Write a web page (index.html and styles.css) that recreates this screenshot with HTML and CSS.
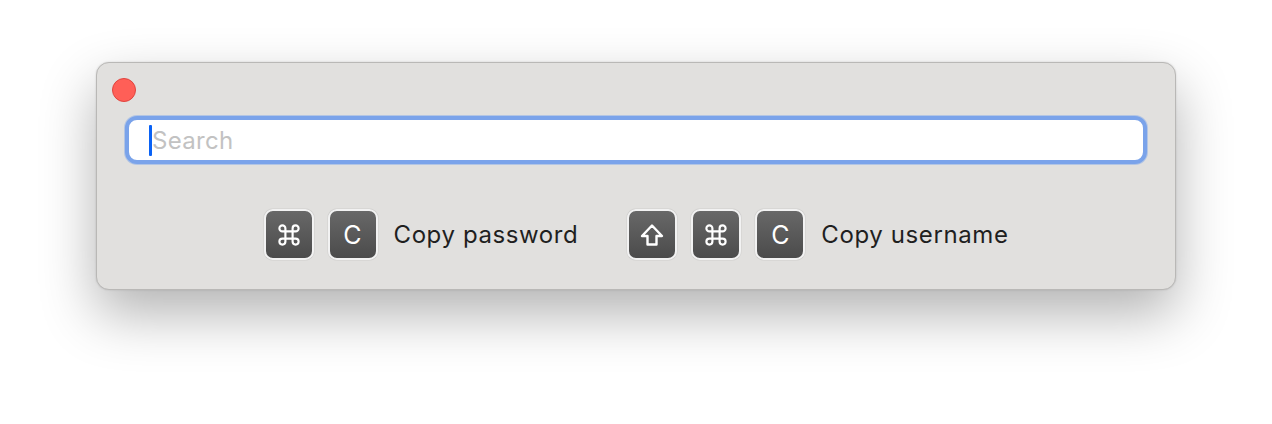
FILE: index.html
```html
<!DOCTYPE html>
<html lang="en">
<head>
  <meta charset="UTF-8">
  <title>Quick Search</title>
  <link rel="stylesheet" href="styles.css">
</head>
<body>
<div class="window">
  <div class="titlebar">
    <span class="close-btn"></span>
  </div>
  <div class="search-field">
    <span class="caret"></span>
    <span class="placeholder">Search</span>
  </div>
  <div class="shortcuts">
    <div class="shortcut">
      <span class="key">
        <svg class="icon" width="24" height="24" viewBox="0 0 20 20"><path d="M7 7 V4.5 A2.5 2.5 0 1 0 4.5 7 H15.5 A2.5 2.5 0 1 0 13 4.5 V15.5 A2.5 2.5 0 1 0 15.5 13 H4.5 A2.5 2.5 0 1 0 7 15.5 Z" fill="none" stroke="#fff" stroke-width="1.8" stroke-linejoin="round"/></svg>
      </span>
      <span class="key">C</span>
      <span class="label">Copy password</span>
    </div>
    <div class="shortcut">
      <span class="key">
        <svg class="icon" width="24" height="24" viewBox="0 0 24 24"><path d="M12 2.5 L22 13 H16.5 V21.5 H7.5 V13 H2 Z" fill="none" stroke="#fff" stroke-width="2.4" stroke-linejoin="round"/></svg>
      </span>
      <span class="key">
        <svg class="icon" width="24" height="24" viewBox="0 0 20 20"><path d="M7 7 V4.5 A2.5 2.5 0 1 0 4.5 7 H15.5 A2.5 2.5 0 1 0 13 4.5 V15.5 A2.5 2.5 0 1 0 15.5 13 H4.5 A2.5 2.5 0 1 0 7 15.5 Z" fill="none" stroke="#fff" stroke-width="1.8" stroke-linejoin="round"/></svg>
      </span>
      <span class="key">C</span>
      <span class="label">Copy username</span>
    </div>
  </div>
</div>
</body>
</html>
```

FILE: styles.css
```css
html, body {
  height: 100%;
}

body {
  margin: 0;
  background: #fff;
  font-family: "Inter", "Liberation Sans", sans-serif;
  overflow: hidden;
}

.window {
  width: 1080px;
  height: 228px;
  box-sizing: border-box;
  margin: 62px auto 0 auto;
  background: #e1e0de;
  border: 1px solid #b9b8b6;
  border-radius: 13px;
  box-shadow: 0 24px 55px rgba(0, 0, 0, 0.3), 0 0 2px rgba(0, 0, 0, 0.15);
  padding: 15px 28px 0 15px;
}

.titlebar {
  height: 24px;
}

.close-btn {
  display: block;
  width: 24px;
  height: 24px;
  box-sizing: border-box;
  border-radius: 50%;
  background: #ff5f57;
  border: 1px solid #e0443e;
}

.search-field {
  margin: 14px 0 0 13px;
  height: 48px;
  box-sizing: border-box;
  background: #fff;
  border: 4px solid #7aa3ea;
  border-radius: 12px;
  box-shadow: 0 0 0 1px rgba(122, 163, 234, 0.45);
  display: flex;
  align-items: center;
  padding-left: 20px;
}

.caret {
  width: 3px;
  height: 31px;
  background: #0a62f5;
  border-radius: 1px;
}

.placeholder {
  font-size: 24px;
  color: #c2c2c2;
  letter-spacing: 0.3px;
}

.shortcuts {
  display: flex;
  justify-content: center;
  gap: 49px;
  margin: 45px 0 0 13px;
}

.shortcut {
  display: flex;
  align-items: center;
  gap: 14px;
}

.key {
  width: 50px;
  height: 51px;
  box-sizing: border-box;
  border: 2px solid #f2f2f2;
  border-radius: 9px;
  background: linear-gradient(#686868, #4b4b4b);
  box-shadow: 0 0 1px rgba(0, 0, 0, 0.4);
  color: #fff;
  font-size: 25px;
  display: flex;
  align-items: center;
  justify-content: center;
}

.icon {
  display: block;
}

.label {
  font-size: 24px;
  color: #1f1f1f;
  letter-spacing: 0.6px;
  margin-left: 2px;
}
```
